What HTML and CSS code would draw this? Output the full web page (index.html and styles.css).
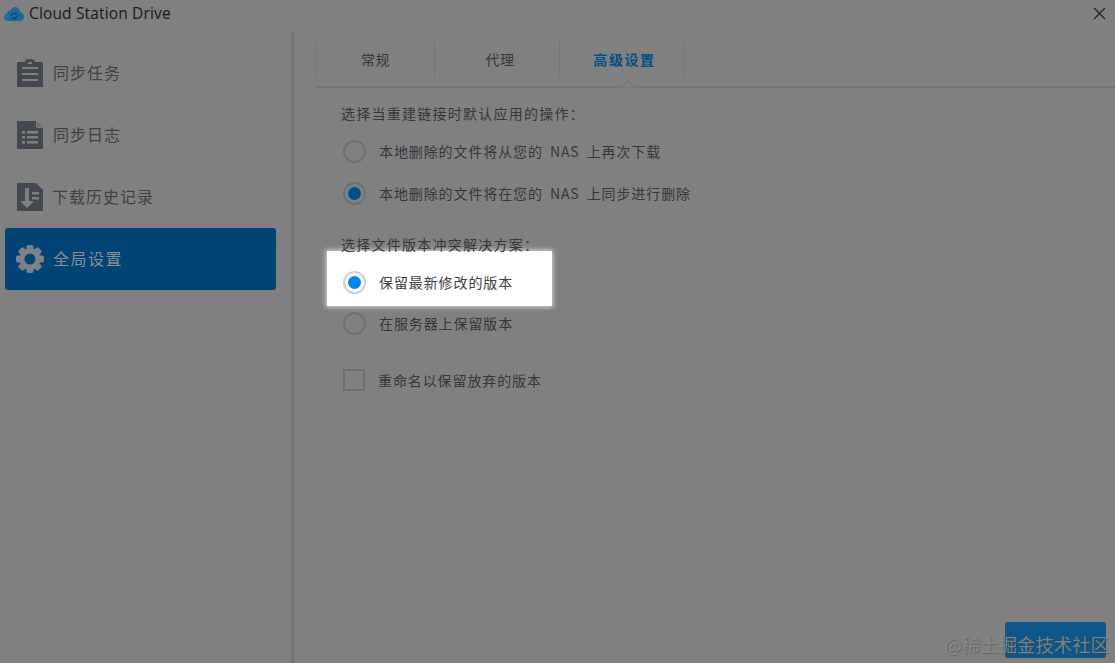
FILE: index.html
```html
<!DOCTYPE html>
<html lang="zh">
<head>
<meta charset="utf-8">
<title>Cloud Station Drive</title>
<link rel="stylesheet" href="styles.css">
</head>
<body>
<div class="window">
  <header class="titlebar">
    <svg class="logo" viewBox="0 0 20 15" width="20" height="15"><path d="M4 15C1.500 15 0 13.200 0 11.200 0 9.300 1.300 7.900 3 7.600 3.200 5.600 4.800 4.600 6.300 4.900 7.200 2.300 9.400 .8 11.600 1.100 14.300 1.500 15.800 3.600 15.800 6 18.200 6.500 20 8.400 20 10.800 20 13.200 18 15 15.800 15Z" fill="#1a6a9f"/><path d="M7.200 9.600A3 3 0 0 1 12.400 8.400M12.800 10.400A3 3 0 0 1 7.600 11.600" fill="none" stroke="#0d3a58" stroke-width="1.100"/></svg>
    <span class="app-name">Cloud Station Drive</span>
    <svg class="close" viewBox="0 0 13 13" width="13" height="13"><path d="M1 1 12 12M12 1 1 12" stroke="#1c1c1c" stroke-width="1.100" fill="none"/></svg>
  </header>
  <div class="body">
    <nav class="sidebar">
      <div class="nav-item">
        <svg class="nav-icon" viewBox="0 0 26 28" width="26" height="28"><path fill-rule="evenodd" fill="#43474f" d="M1 3H8V2.500C8 1 9.500 0 13 0S18 1 18 2.500V3H25C25.600 3 26 3.400 26 4V27C26 27.600 25.600 28 25 28H1C.4 28 0 27.600 0 27V4C0 3.400.4 3 1 3ZM11 3V5H15V3ZM5 8V10H21V8ZM5 14V16H21V14ZM5 20V22H21V20Z"/></svg>
        <span class="nav-label">同步任务</span>
      </div>
      <div class="nav-item">
        <svg class="nav-icon" viewBox="0 0 26 28" width="26" height="28"><path fill-rule="evenodd" fill="#43474f" d="M1 0H19V5C19 6 20 7 21 7H26V27C26 27.600 25.600 28 25 28H1C.4 28 0 27.600 0 27V1C0 .4.4 0 1 0ZM5 10V12.500H8V10ZM10 10V12.500H21V10ZM5 15V17.500H8V15ZM10 15V17.500H21V15ZM5 20V22.500H8V20ZM10 20V22.500H21V20Z"/><path fill="#6a6d72" d="M20 .5 26 6H21C20.400 6 20 5.600 20 5Z"/></svg>
        <span class="nav-label">同步日志</span>
      </div>
      <div class="nav-item">
        <svg class="nav-icon" viewBox="0 0 26 28" width="26" height="28"><path fill-rule="evenodd" fill="#43474f" d="M1 0H19L26 7V27C26 27.600 25.600 28 25 28H1C.4 28 0 27.600 0 27V1C0 .4.4 0 1 0ZM8 5V18H3L10 25 17 18H12V5ZM15 9V11.500H22V9ZM15 14V16.500H22V14Z"/></svg>
        <span class="nav-label nav-label-tight">下载历史记录</span>
      </div>
      <div class="nav-item is-active">
        <svg class="nav-icon" viewBox="0 0 28 28" width="28" height="28">
          <g fill="#7d8288">
            <circle cx="14" cy="14" r="10.500"/>
            <rect x="10.500" y="0" width="7" height="28" rx="2"/>
            <rect x="10.500" y="0" width="7" height="28" rx="2" transform="rotate(45 14 14)"/>
            <rect x="10.500" y="0" width="7" height="28" rx="2" transform="rotate(90 14 14)"/>
            <rect x="10.500" y="0" width="7" height="28" rx="2" transform="rotate(135 14 14)"/>
          </g>
          <circle cx="14" cy="14" r="5.500" fill="#004475"/>
        </svg>
        <span class="nav-label nav-label-wide">全局设置</span>
      </div>
    </nav>
    <main class="content">
      <div class="tabs">
        <div class="tab tab-general">常规</div>
        <div class="tab tab-proxy">代理</div>
        <div class="tab tab-advanced is-current">高级设置</div>
        <svg class="tab-notch" viewBox="0 0 16 8" width="16" height="8"><path d="M0 7.500H1L8 1 15 7.500H16" fill="#808080" stroke="#6f6f6f" stroke-width="1"/></svg>
      </div>
      <section class="panel">
        <p class="group-title">选择当重建链接时默认应用的操作：</p>
        <div class="option"><span class="radio"></span><span>本地删除的文件将从您的 NAS 上再次下载</span></div>
        <div class="option"><span class="radio is-on"></span><span>本地删除的文件将在您的 NAS 上同步进行删除</span></div>
        <p class="group-title group-second">选择文件版本冲突解决方案：</p>
        <div class="option option-lit"><span class="radio is-on"></span><span>保留最新修改的版本</span></div>
        <div class="option"><span class="radio"></span><span>在服务器上保留版本</span></div>
        <div class="option option-check"><span class="checkbox"></span><span>重命名以保留放弃的版本</span></div>
      </section>
      <footer class="actions"><button class="apply">应用</button></footer>
    </main>
  </div>
  <div class="watermark">@稀土掘金技术社区</div>
</div>
</body>
</html>
```
FILE: styles.css
```css
* { box-sizing: border-box; }
html, body { margin: 0; padding: 0; }
body {
  width: 1115px;
  height: 663px;
  overflow: hidden;
  background: #808080;
  font-family: "Noto Sans CJK SC", "Noto Sans", sans-serif;
  color: #33373d;
}
.window { position: relative; width: 1115px; height: 663px; display: flex; flex-direction: column; }
.titlebar { height: 32px; flex: none; display: flex; align-items: center; padding: 0 9px 6px 4px; }
.logo { flex: none; }
.app-name { margin-left: 5px; font: 15.5px "Open Sans", "Liberation Sans", sans-serif; letter-spacing: .15px; color: #15181c; }
.close { margin-left: auto; }
.body { flex: 1; display: flex; min-height: 0; }
.sidebar { width: 294px; flex: none; padding: 10px 15px 0 5px; border-right: 3px solid #737373; }
.nav-item { height: 62px; display: flex; align-items: center; padding-left: 12px; border-radius: 3px; font-size: 16px; color: #3d4046; }
.nav-icon { flex: none; margin-right: 10px; }
.nav-label { letter-spacing: 1px; margin-bottom: 2px; }
.nav-label-tight { margin-left: -1px; }
.nav-label-wide { letter-spacing: 1.5px; }
.nav-item.is-active { background: #004475; color: #8b8f94; }
.nav-item.is-active .nav-icon { margin-right: 9px; margin-left: -1px; }
.content { flex: 1; min-width: 0; display: flex; flex-direction: column; padding: 10px 9px 5px 22px; }
.tabs { position: relative; height: 46px; flex: none; display: flex; margin-right: -9px; border-bottom: 2px solid #737373; padding-bottom: 10px; }
.tab { display: flex; align-items: center; justify-content: center; height: 35px; padding-bottom: 2px; font-size: 14px; letter-spacing: .5px; border-right: 1px solid #707680; }
.tab-general { width: 119px; border-left: 1px solid #707680; }
.tab-proxy { width: 125px; padding-left: 6px; }
.tab-advanced { width: 125px; padding-left: 5px; }
.tab.is-current { color: #004f86; font-weight: 700; letter-spacing: 1.6px; }
.tab-notch { position: absolute; left: 304px; bottom: -2px; }
.panel { flex: 1; padding: 15px 0 0 25px; font-size: 14px; letter-spacing: .9px; word-spacing: 3px; }
.group-title { margin: 0; height: 20px; line-height: 20px; letter-spacing: 1.25px; }
.group-second { margin-top: 20px; }
.option { display: flex; align-items: center; height: 42px; }
.option .radio, .option .checkbox { margin-right: 13px; }
.group-title + .option { margin-top: 7px; }
.radio { flex: none; width: 23px; height: 23px; margin-left: 2px; border: 2px solid #6b7077; border-radius: 50%; background: #808080; position: relative; }
.radio.is-on::after { content: ""; position: absolute; inset: 3px; border-radius: 50%; background: #004f86; }
.checkbox { flex: none; width: 22px; height: 22px; margin-left: 2px; border: 2px solid #6b7077; background: #808080; }
.group-title + .option-lit { margin: -3px 0 -4px -14px; }
.option-lit { width: 225px; height: 55px; padding: 7px 0 0 14px; background: #fff; box-shadow: 0 0 5px 1px rgba(255,255,255,.7); color: #3d4046; }
.option-lit .radio { background: #fff; border-color: #c5d3e3; }
.option-lit .radio.is-on::after { background: #0086f0; }
.option-check { margin-top: 15px; }
.actions { display: flex; justify-content: flex-end; flex: none; }
.apply { width: 101px; height: 36px; border: 0; border-radius: 3px; background: #0d5687; color: #17557f; font: 14px "Noto Sans CJK SC", sans-serif; }
.watermark { position: absolute; right: 6px; bottom: 5px; font-size: 18.4px; line-height: 28px; color: rgba(140,140,140,.85); text-shadow: 1px 1px 1px rgba(60,60,60,.45); white-space: nowrap; }
```
